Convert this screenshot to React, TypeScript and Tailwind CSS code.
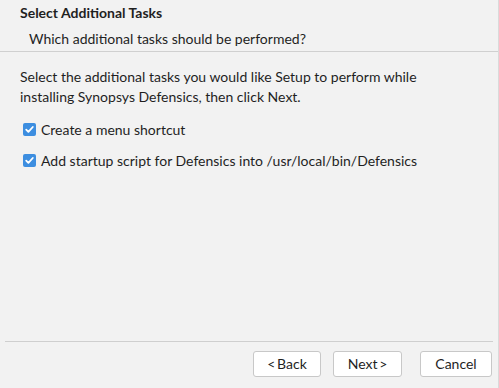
import { useState } from 'react';

function Check({ checked, onToggle }: { checked: boolean; onToggle: () => void }) {
  return (
    <button
      onClick={onToggle}
      className={`w-[13px] h-[13px] rounded-[2px] flex items-center justify-center shrink-0 ${checked ? 'bg-[#3d8ee0]' : 'bg-white border border-[#a0a0a0]'}`}
    >
      {checked && (
        <svg width="11" height="11" viewBox="0 0 11 11">
          <path d="M2.2 5.6 L4.4 7.9 L8.8 3" fill="none" stroke="white" strokeWidth="1.8" strokeLinecap="round" strokeLinejoin="round" />
        </svg>
      )}
    </button>
  );
}

export default function App() {
  const [menu, setMenu] = useState(true);
  const [script, setScript] = useState(true);

  return (
    <div className="w-[499px] h-[388px] bg-[#f2f2f2] text-[#1f1f1f] flex flex-col border-r border-[#dadada]" style={{ fontFamily: 'Lato, "Noto Sans", sans-serif' }}>
      <div className="h-[52px] border-b border-[#d0d0d0] shrink-0">
        <div className="pl-[20px] pt-[4px] text-[14px] font-bold leading-[18px]">Select Additional Tasks</div>
        <div className="pl-[29px] pt-[8px] text-[14px] leading-[18px]">Which additional tasks should be performed?</div>
      </div>

      <div className="flex-1 px-[20px] pt-[15px]">
        <p className="text-[14px] leading-[20px]">
          Select the additional tasks you would like Setup to perform while
          <br />
          installing Synopsys Defensics, then click Next.
        </p>
        <div className="mt-[13px] flex flex-col gap-[12px] pl-[3px]">
          <label className="flex items-center gap-[5px] text-[14px] leading-[19px]">
            <Check checked={menu} onToggle={() => setMenu(m => !m)} />
            Create a menu shortcut
          </label>
          <label className="flex items-center gap-[5px] text-[14px] leading-[19px]">
            <Check checked={script} onToggle={() => setScript(s => !s)} />
            Add startup script for Defensics into /usr/local/bin/Defensics
          </label>
        </div>
      </div>

      <div className="mx-[5px] border-t border-[#cfcfcf] h-[47px] shrink-0 flex items-start justify-end pt-[9px] pr-[1px]">
        <button className="w-[68px] h-[26px] pb-[2px] bg-white border border-[#c8c8c8] rounded-[3px] text-[14px]">&lt;&#8201;Back</button>
        <button className="ml-[12px] w-[69px] h-[26px] pb-[2px] bg-white border border-[#c8c8c8] rounded-[3px] text-[14px]">Next&#8201;&gt;</button>
        <button className="ml-[18px] w-[72px] h-[26px] pb-[2px] bg-white border border-[#c8c8c8] rounded-[3px] text-[14px]">Cancel</button>
      </div>
    </div>
  );
}
